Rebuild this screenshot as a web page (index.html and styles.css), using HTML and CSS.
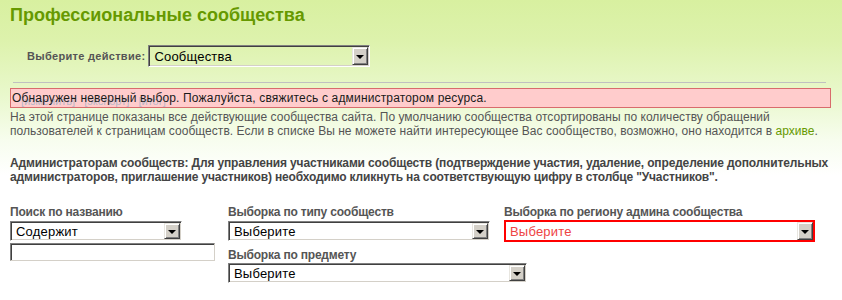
FILE: index.html
```html
<!DOCTYPE html>
<html>
<head>
  <meta charset="utf-8">
  <title>Профессиональные сообщества</title>
  <link rel="stylesheet" href="styles.css">
</head>
<body>
  <div class="page">
    <h1 class="title">Профессиональные сообщества</h1>

    <div class="action-row">
      <label class="action-label">Выберите действие:</label>
      <div class="combo combo-action">
        <select><option>Сообщества</option></select>
        <span class="arrow"></span>
      </div>
    </div>

    <hr class="sep">

    <div class="error">
      <span class="ghost-links">[изменить]&nbsp;&nbsp;&nbsp;[экспорт]&nbsp;&nbsp;&nbsp;[итог]</span>
      <span class="error-text">Обнаружен неверный выбор. Пожалуйста, свяжитесь с администратором ресурса.</span>
    </div>

    <p class="intro">На этой странице показаны все действующие сообщества сайта. По умолчанию сообщества отсортированы по количеству обращений<br>
    пользователей к страницам сообществ. Если в списке Вы не можете найти интересующее Вас сообщество, возможно, оно находится в <a href="#">архиве</a>.</p>

    <p class="admins">Администраторам сообществ: Для управления участниками сообществ (подтверждение участия, удаление, определение дополнительных<br>
    администраторов, приглашение участников) необходимо кликнуть на соответствующую цифру в столбце "Участников".</p>

    <div class="filters">
      <div class="col">
        <label class="flabel">Поиск по названию</label>
        <div class="combo combo-name">
          <select><option>Содержит</option></select>
          <span class="arrow"></span>
        </div>
        <input class="text-input" type="text">
      </div>
      <div class="col">
        <label class="flabel">Выборка по типу сообществ</label>
        <div class="combo combo-type">
          <select><option>Выберите</option></select>
          <span class="arrow"></span>
        </div>
        <label class="flabel flabel-next">Выборка по предмету</label>
        <div class="combo combo-subject">
          <select><option>Выберите</option></select>
          <span class="arrow"></span>
        </div>
      </div>
      <div class="col">
        <label class="flabel">Выборка по региону админа сообщества</label>
        <div class="combo combo-region">
          <select><option>Выберите</option></select>
          <span class="arrow"></span>
        </div>
      </div>
    </div>
  </div>
</body>
</html>
```

FILE: styles.css
```css
body {
  margin: 0;
  font-family: "Liberation Sans", Arial, sans-serif;
  background: #fff linear-gradient(to bottom, #d8f0a0 0, #ddf2ac 40px, #e9f8cc 95px, #f7fdee 140px, #fff 175px) no-repeat;
  background-size: 100% 300px;
  color: #555;
}

.page {
  padding: 0 10px;
}

.title {
  margin: 0;
  padding-top: 4px;
  font-size: 18px;
  line-height: 22px;
  font-weight: bold;
  color: #669900;
}

.action-row {
  display: flex;
  align-items: center;
  margin: 19px 0 0 17px;
  gap: 3px;
}

.action-label {
  font-size: 11px;
  font-weight: bold;
  letter-spacing: 0.3px;
  color: #555;
}

/* classic sunken combo box */
.combo {
  display: flex;
  box-sizing: border-box;
  height: 20px;
  padding: 1px;
  border: 1px solid;
  border-color: #808080 #fff #fff #808080;
  box-shadow: inset 1px 1px 0 #404040, inset -1px -1px 0 #d4d0c8;
  background: #fff;
}

.combo select {
  flex: 1;
  min-width: 0;
  -webkit-appearance: none;
  appearance: none;
  border: none;
  outline: none;
  margin: 0;
  padding: 0 0 0 4px;
  background: transparent;
  font-family: "Liberation Sans", Arial, sans-serif;
  font-size: 13px;
  letter-spacing: 0.2px;
  color: #000;
}

.arrow {
  position: relative;
  box-sizing: border-box;
  width: 16px;
  flex: none;
  background: #d4d0c8;
  border: 1px solid;
  border-color: #e8e6e0 #404040 #404040 #e8e6e0;
  box-shadow: inset 1px 1px 0 #fff, inset -1px -1px 0 #808080;
}

.arrow::after {
  content: "";
  position: absolute;
  left: 50%;
  top: 50%;
  margin: -1px 0 0 -4px;
  border-left: 4px solid transparent;
  border-right: 4px solid transparent;
  border-top: 4px solid #000;
}

.combo-action {
  width: 222px;
  height: 22px;
  background: transparent;
}

.combo-name {
  width: 172px;
}

.combo-type {
  width: 262px;
}

.combo-subject {
  width: 299px;
}

.combo-region {
  width: 311px;
  height: 22px;
  margin-top: -1px;
  padding: 0;
  border: 2px solid #ff0000;
  box-shadow: none;
}

.combo-region select {
  color: #ee4444;
}

.sep {
  margin: 15px 6px 0 3px;
  border: none;
  border-top: 1px solid #c0c0c0;
  height: 0;
}

.error {
  position: relative;
  box-sizing: border-box;
  width: 821px;
  height: 20px;
  margin-top: 5px;
  background: #ffcccc;
  border: 1px solid #d86c6c;
  font-size: 12px;
  line-height: 18px;
  letter-spacing: 0.16px;
  padding-left: 1px;
  white-space: nowrap;
}

.ghost-links {
  position: absolute;
  left: 10px;
  top: 3px;
  font-size: 11px;
  letter-spacing: 0;
  color: #b8b8c8;
}

.error-text {
  position: relative;
  color: #1a1a1a;
}

.intro {
  margin: 2px 0 0;
  font-size: 12px;
  line-height: 14px;
  letter-spacing: 0.03px;
  white-space: nowrap;
  color: #555;
}

.intro a {
  color: #669900;
  text-decoration: none;
}

.admins {
  margin: 18px 0 0;
  font-size: 12px;
  line-height: 14px;
  font-weight: bold;
  letter-spacing: -0.15px;
  white-space: nowrap;
  color: #444;
}

.filters {
  display: grid;
  grid-template-columns: 218px 276px auto;
  margin-top: 21px;
}

.col {
  display: flex;
  flex-direction: column;
  align-items: flex-start;
}

.flabel {
  font-size: 12px;
  line-height: 14px;
  font-weight: bold;
  letter-spacing: -0.2px;
  color: #555;
  margin-bottom: 2px;
}

.flabel-next {
  margin-top: 7px;
  margin-bottom: 1px;
}

.text-input {
  box-sizing: border-box;
  width: 205px;
  height: 18px;
  margin: 2px 0 0;
  padding: 0 3px;
  border: 1px solid;
  border-color: #808080 #d4d0c8 #d4d0c8 #808080;
  box-shadow: inset 1px 1px 0 #404040;
  background: #fff;
  outline: none;
}
```
